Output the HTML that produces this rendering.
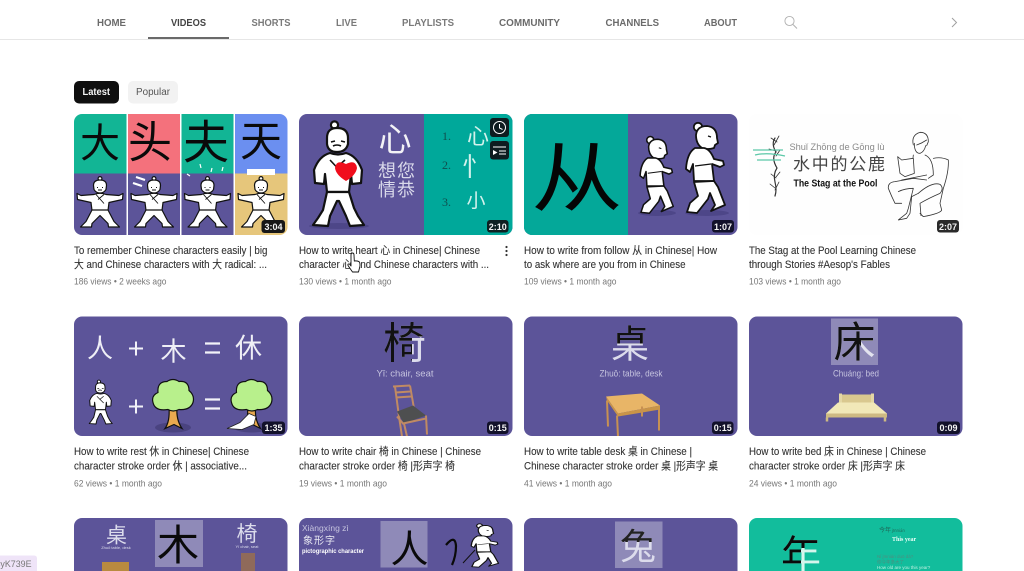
<!DOCTYPE html>
<html lang="en"><head><meta charset="utf-8"><title>Videos</title>
<style>
html,body{margin:0;padding:0;background:#fff;width:1024px;height:571px;overflow:hidden}
svg#p{display:block;filter:blur(.3px)}
text{font-family:"Liberation Sans","Noto Sans CJK SC",sans-serif}
.tab{font-size:10px;font-weight:700;fill:#6b6b6b}
.t{font-size:11px;fill:#333;stroke:#333;stroke-width:.12}
.m{font-size:9.5px;fill:#777}
.d{font-size:9px;font-weight:700;fill:#f4f4f4;text-anchor:middle}
.c{text-anchor:middle}
.k{font-family:"Noto Sans CJK SC","Liberation Sans",sans-serif;text-anchor:middle}
.l{fill:none;stroke:#333;stroke-width:.8;stroke-linejoin:round;stroke-linecap:round}
.z{fill:none;stroke:#333;stroke-width:2.4;stroke-linejoin:round;stroke-linecap:round}
</style></head><body>
<svg id="p" xmlns="http://www.w3.org/2000/svg" width="1024" height="571" viewBox="0 0 1024 571">
<defs>
<clipPath id="r1"><rect width="213.5" height="121" rx="8"/></clipPath>
<clipPath id="r2"><rect width="213.5" height="119.5" rx="8"/></clipPath>
<clipPath id="r3"><rect width="213.5" height="70" rx="8"/></clipPath>
<g id="arms" stroke="#111" stroke-width="1.2" stroke-linejoin="round" fill="#fff">
<circle cx="0" cy="2" r="1.9"/>
<path d="M-6.5 9Q-6.5 3.5 0 3.5Q6.5 3.5 6.5 9L6 13Q4 16.5 0 16.5Q-4 16.5 -6 13Z"/>
<path d="M-6 18L-19 19L-23 17L-22.5 23L-9 26L-8 34H8L9 26L22.5 23L23 17L19 19L6 18Q0 15.5-6 18Z"/>
<path d="M-8 33.5L-14 45L-19.5 50.5H-8.5L-8 47L0 39L8 47L8.5 50.5H19.5L14 45L8 33.5Z"/>
<path d="M-4 18L4 27M4 18L-2 23" fill="none" stroke-width=".9"/>
<path d="M-3 11H-2M2 11H3M-2 13.500H2" fill="none" stroke-width=".9"/>
</g>
<g id="stand" stroke="#111" stroke-width="2.2" stroke-linejoin="round" fill="#fff">
<circle cx="-3.5" cy="5" r="3.6"/>
<path d="M-11 18Q-11 8 -1 8Q10 8 10 18L10 24Q8 32 -1 32Q-10 32 -11 24Z"/>
<path d="M-8 33Q-19 36 -24 50L-23 63L-14 64L-13 54L-11 72H11L13 54L14 64L23 63L24 50Q19 36 8 33Q0 36-8 33Z"/>
<path d="M-11 72L-15 90L-20 98L-25 105L-10 106L-8 96L-1 81L1 81L8 96L12 106L26 105L20 96L16 88L11 72Z"/>
<path d="M-7 22L-3 21M3 21L7 22M-5 26Q-1 24 3 26M-8 40L7 56M7 40L-2 48" fill="none" stroke-width="1.6"/>
</g>
<g id="walk" stroke="#111" stroke-width="1.8" stroke-linejoin="round" fill="#fff">
<circle cx="-2" cy="6" r="4.2"/>
<path d="M-4 14Q-3 5 7 5Q17 6 17 17L18 22L15 24L14 27Q8 29 2 27Q-4 23-4 14Z"/>
<path d="M-5 27Q-13 32 -14 48L-10 51L-7 43L-6 60H14L12 43L20 46L24 44L23 40L14 38Q10 28 4 27Z"/>
<path d="M-6 61L-2 75L-10 82L-13 91L-3 92L8 78L10 72L15 84L11 90L25 84L18 66L14 60Z"/>
<path d="M8 15L11 16M-5 45L11 43" fill="none" stroke-width="1.2"/>
</g>
<g id="tree">
<ellipse cx="0" cy="14" rx="18" ry="5" fill="#4a4380"/>
<path d="M-8 15Q-3 8-4-6L4-6Q3 6 9 15L1 11Z" fill="#e9a94f" stroke="#111" stroke-width="1.2"/>
<path d="M-5-4Q-18-2-20-11Q-22-18-15-21Q-16-32-6-32Q0-36 6-32Q16-33 16-23Q22-18 20-11Q17-3 6-4Q0-1-5-4Z" fill="#b8f08c" stroke="#111" stroke-width="1.2"/>
</g>
</defs>

<!-- header -->
<rect x="0" y="39" width="1024" height="1" fill="#e6e6e6"/>
<rect x="148" y="37" width="81" height="2" fill="#6a6a6a"/>
<g>
<text class="tab" x="97" y="26" textLength="29" lengthAdjust="spacingAndGlyphs">HOME</text>
<text class="tab" x="171" y="26" textLength="35" lengthAdjust="spacingAndGlyphs" style="fill:#444">VIDEOS</text>
<text class="tab" x="251.500" y="26" textLength="39" lengthAdjust="spacingAndGlyphs" style="fill:#7a7a7a">SHORTS</text>
<text class="tab" x="336" y="26" textLength="21" lengthAdjust="spacingAndGlyphs" style="fill:#7a7a7a">LIVE</text>
<text class="tab" x="402" y="26" textLength="52" lengthAdjust="spacingAndGlyphs" style="fill:#7a7a7a">PLAYLISTS</text>
<text class="tab" x="499" y="26" textLength="61" lengthAdjust="spacingAndGlyphs">COMMUNITY</text>
<text class="tab" x="605.500" y="26" textLength="53.500" lengthAdjust="spacingAndGlyphs">CHANNELS</text>
<text class="tab" x="704" y="26" textLength="33" lengthAdjust="spacingAndGlyphs">ABOUT</text>
</g>
<circle cx="789.500" cy="21" r="4.600" fill="none" stroke="#b0b0b0" stroke-width=".9"/>
<path d="M793 24.500L797 28.500" stroke="#b0b0b0" stroke-width="1"/>
<path d="M952 18L956.500 22.500L952 27" fill="none" stroke="#a0a0a0" stroke-width="1"/>

<!-- chips -->
<rect x="74" y="81" width="45" height="22.500" rx="5" fill="#0f0f0f"/>
<text x="82.500" y="95" font-size="10" font-weight="700" fill="#f5f5f5" textLength="27.500" lengthAdjust="spacingAndGlyphs">Latest</text>
<rect x="128" y="81" width="50" height="22.500" rx="5" fill="#f2f2f2"/>
<text x="136" y="95" font-size="10" fill="#555" textLength="34" lengthAdjust="spacingAndGlyphs">Popular</text>

<!-- thumb 1 -->
<g transform="translate(74,114)" clip-path="url(#r1)">
<rect width="214" height="121" fill="#fff"/>
<rect x="0" width="52.500" height="59.500" fill="#12b595"/>
<rect x="54" width="52" height="59.500" fill="#f4717c"/>
<rect x="107.500" width="52" height="59.500" fill="#12b595"/>
<rect x="161" width="53" height="59.500" fill="#6b8ff0"/>
<rect x="0" y="59.500" width="52.500" height="62" fill="#5c5499"/>
<rect x="54" y="59.500" width="52" height="62" fill="#5c5499"/>
<rect x="107.500" y="59.500" width="52" height="62" fill="#5c5499"/>
<rect x="161" y="59.500" width="53" height="62" fill="#e6c67b"/>
<text class="k" x="26" y="43" font-size="40" fill="#0a0a0a">大</text>
<text class="k" x="76" y="43.500" font-size="44" fill="#0a0a0a">头</text>
<text class="k" x="132" y="44.500" font-size="46" fill="#0a0a0a">夫</text>
<text class="k" x="187" y="42" font-size="42" fill="#0a0a0a">天</text>
<use href="#arms" transform="translate(26,62.500)"/>
<use href="#arms" transform="translate(80,62.500)"/>
<use href="#arms" transform="translate(133.500,62.500)"/>
<use href="#arms" transform="translate(187,62.500)"/>
<path d="M62 63L71 66M59 69L68 72" stroke="#fff" stroke-width="2.200"/>
<path d="M113 60L116 62M126 50L127 54M138 54L137 58M149 53L148 57" stroke="#fff" stroke-width="1.200"/>
<rect x="173" y="55" width="28" height="6" fill="#fff"/>
</g>

<!-- thumb 2 -->
<g transform="translate(299,114)" clip-path="url(#r1)">
<rect width="214" height="121" fill="#5c5499"/>
<rect x="125" width="89" height="121" fill="#00a89a"/>
<ellipse cx="40" cy="112" rx="30" ry="3" fill="#4d4688"/>
<use href="#stand" transform="translate(39,6)"/>
<path d="M47 50Q37 45 36 54Q37 61 47 67Q57 61 58 54Q57 45 47 50Z" fill="#f00d1c"/>
<text class="k" x="96" y="37" font-size="33" fill="#f2f2f6">心</text>
<text class="k" x="88" y="63" font-size="18" fill="#d9d9ea">想</text>
<text class="k" x="107" y="63" font-size="18" fill="#d9d9ea">您</text>
<text class="k" x="88" y="82" font-size="18" fill="#d9d9ea">情</text>
<text class="k" x="107" y="82" font-size="18" fill="#d9d9ea">恭</text>
<text x="143" y="26" font-size="12" style="font-family:'Liberation Serif',serif" fill="#0f4f4f">1.</text>
<text x="143" y="55" font-size="12" style="font-family:'Liberation Serif',serif" fill="#0f4f4f">2.</text>
<text x="143" y="92" font-size="12" style="font-family:'Liberation Serif',serif" fill="#0f4f4f">3.</text>
<text class="k" x="179" y="30" font-size="22" fill="#d3f2ec">心</text>
<text class="k" x="176" y="62" font-size="26" fill="#d3f2ec">忄</text>
<text class="k" x="177" y="93" font-size="19" fill="#d3f2ec">小</text>
<rect x="191" y="4" width="19" height="19" rx="3" fill="#0e1c20"/>
<circle cx="200.500" cy="13.500" r="6" fill="none" stroke="#fff" stroke-width="1"/>
<path d="M200.500 10V14L203.500 15.500" fill="none" stroke="#fff" stroke-width="1"/>
<rect x="191" y="27" width="19" height="18.500" rx="3" fill="#0e1c20"/>
<path d="M194 33H207M200 37H207M200 40H207" stroke="#fff" stroke-width="1"/>
<path d="M194 36V41L198.500 38.500Z" fill="#fff"/>
</g>

<!-- thumb 3 -->
<g transform="translate(524,114)" clip-path="url(#r1)">
<rect width="214" height="121" fill="#5c5499"/>
<rect width="104" height="121" fill="#04a899"/>
<text class="k" transform="translate(53,91) scale(1.06,.88)" font-size="86" fill="#050505">从</text>
<ellipse cx="133" cy="99" rx="19" ry="3" fill="#4d4688"/>
<ellipse cx="183" cy="99" rx="22" ry="3" fill="#4d4688"/>
<use href="#walk" transform="translate(128,21) scale(.85)"/>
<use href="#walk" transform="translate(176,7)"/>
</g>

<!-- thumb 4 -->
<g transform="translate(749,114)" clip-path="url(#r1)">
<rect width="214" height="121" fill="#fefefe"/>
<path d="M26 24Q22 30 27 38Q22 44 28 54Q24 60 26 68Q28 76 26 82" class="l" style="stroke-width:1.200"/>
<path d="M22 24L28 28M30 22L25 31M20 35L27 37M31 36L27 42M21 70L26 74M30 68L26 76M22 60L27 64M31 58L27 63" class="l"/>
<path d="M4 36H34M6 41Q18 38 36 42M8 46H32" fill="none" stroke="#5cc8a8" stroke-width="1.300"/>
<text class="c" x="88" y="36" font-size="9.500" fill="#8a8a8a" textLength="95" lengthAdjust="spacingAndGlyphs">Shuǐ Zhōng de Gōng lù</text>
<text class="k" x="90" y="56" font-size="17" fill="#444" textLength="92" lengthAdjust="spacing">水中的公鹿</text>
<text x="44.500" y="72.500" font-size="10.500" font-weight="700" fill="#111" textLength="84" lengthAdjust="spacingAndGlyphs">The Stag at the Pool</text>
<g transform="translate(136,11) scale(.3333)" class="z">
<path d="M85 60Q78 30 105 22Q130 22 130 50L125 62"/>
<path d="M88 55Q88 85 105 85Q118 80 122 62M95 60Q110 55 125 45"/>
<path d="M85 90L80 135M120 90Q145 100 145 150L130 160"/>
<path d="M38 95L50 105L85 100L88 145L60 155L45 145Z" fill="#fff"/>
<path d="M145 100Q170 95 190 105Q192 140 175 190L165 235L170 255Q168 265 115 275L105 265"/>
<path d="M100 205Q140 170 165 178Q178 190 165 205Q130 220 105 235L108 272"/>
<path d="M10 190Q8 172 30 170L85 160L125 165M10 190Q20 215 30 235L50 235"/>
<path d="M50 165L125 150M40 200Q60 190 85 190L70 250L65 265L40 285L65 280L75 265L80 215L100 205"/>
</g>
</g>

<!-- thumb 5 -->
<g transform="translate(74,316.500)" clip-path="url(#r2)">
<rect width="214" height="120" fill="#5c5499"/>
<text class="k" x="26" y="41" font-size="26" fill="#efeff6">人</text>
<text class="k" x="99.500" y="44" font-size="26" fill="#efeff6">木</text>
<text class="k" x="174.500" y="41" font-size="27" fill="#efeff6">休</text>
<path d="M55 32H69M62 25V39M55 90H69M62 83V97" stroke="#f2f2f8" stroke-width="2"/>
<path d="M131 27H146M131 36H146M131 83H146M131 92H146" stroke="#f2f2f8" stroke-width="2.200"/>
<use href="#stand" transform="translate(26.500,63) scale(.45,.42)"/>
<use href="#tree" transform="translate(99,97)"/>
<use href="#tree" transform="translate(177.500,97)"/>
<path d="M153 112L166 106L175 97L182 100L180 108L168 113Z" fill="#fff" stroke="#222" stroke-width=".8"/>
</g>

<!-- thumb 6 -->
<g transform="translate(299,316.500)" clip-path="url(#r2)">
<rect width="214" height="120" fill="#5c5499"/>
<text class="k" x="105.500" y="42" font-size="43" fill="#dcdcec">椅</text>
<clipPath id="h6"><path d="M0 0H214V20H113V60H0Z"/></clipPath>
<text class="k" x="105.500" y="42" font-size="43" fill="#111" clip-path="url(#h6)">椅</text>
<text class="c" x="106" y="60" font-size="9.500" fill="#c6c4df" textLength="57" lengthAdjust="spacingAndGlyphs">Yǐ: chair, seat</text>
<path d="M94 70L111 69M96 70L100 100M111 69L115 92M97 76L111 75M97 81L112 80" fill="none" stroke="#c08a63" stroke-width="2"/>
<path d="M98 95L114 89L127 99L105 107Z" fill="#4e4f50"/>
<path d="M100 100L103 120M105 107L108 120M127 99L128 118M98 100L104 107L127 102" fill="none" stroke="#c08a63" stroke-width="2"/>
</g>

<!-- thumb 7 -->
<g transform="translate(524,316.500)" clip-path="url(#r2)">
<rect width="214" height="120" fill="#5c5499"/>
<text class="k" x="106" y="41" font-size="38" fill="#dcdcec">桌</text>
<clipPath id="h7"><rect width="214" height="27"/></clipPath>
<text class="k" x="106" y="41" font-size="38" fill="#111" clip-path="url(#h7)">桌</text>
<text class="c" x="107" y="60" font-size="9" fill="#c6c4df" textLength="63" lengthAdjust="spacingAndGlyphs">Zhuō: table, desk</text>
<path d="M82 80L118 77L136 89L94 97Z" fill="#e8b567"/>
<path d="M82 80L83 84L94 100L136 93L136 89L94 97Z" fill="#c99448"/>
<path d="M83 84L84 110M93 99L94 120M118 90L118 100M135 93L135 114" stroke="#c79152" stroke-width="2"/>
</g>

<!-- thumb 8 -->
<g transform="translate(749,316.500)" clip-path="url(#r2)">
<rect width="214" height="120" fill="#5c5499"/>
<rect x="82" y="2" width="47" height="46.500" fill="#8f8ab8"/>
<text class="k" x="105.500" y="40.500" font-size="42" fill="#e2e2ee">床</text>
<clipPath id="h8"><path d="M0 0H214V24H112V46H80Z"/></clipPath>
<text class="k" x="105.500" y="40.500" font-size="42" fill="#111" clip-path="url(#h8)">床</text>
<text class="c" x="107" y="60" font-size="9" fill="#c6c4df" textLength="46" lengthAdjust="spacingAndGlyphs">Chuáng: bed</text>
<path d="M90 78H124V88H90Z" fill="#d9c88f"/>
<rect x="90" y="77" width="3" height="11" fill="#e4d7a5"/>
<rect x="122" y="77" width="3" height="11" fill="#e4d7a5"/>
<path d="M89 86H125L138 97H77Z" fill="#f1e8b8"/>
<path d="M77 97H138V101H77Z" fill="#cdb983"/>
<path d="M78 101V105M136 101V105" stroke="#cdb983" stroke-width="2.500"/>
</g>

<!-- row 3 -->
<g transform="translate(74,518)" clip-path="url(#r3)">
<rect width="214" height="70" fill="#5c5499"/>
<rect x="81" y="2" width="48" height="47" fill="#8f8ab8"/>
<text class="k" x="42.500" y="24.500" font-size="21" fill="#dcdcec">桌</text>
<text class="k" x="104" y="42" font-size="42" fill="#0a0a0a">木</text>
<text class="k" x="173" y="23" font-size="21" fill="#dcdcec">椅</text>
<text class="c" x="42" y="31" font-size="4" fill="#dcdcec">Zhuō table, desk</text>
<text class="c" x="173" y="30" font-size="4" fill="#dcdcec">Yǐ chair, seat</text>
<rect x="28" y="44" width="27" height="20" fill="#b98a3f"/>
<rect x="167" y="35" width="14" height="24" fill="#8f6a5a"/>
</g>
<g transform="translate(299,518)" clip-path="url(#r3)">
<rect width="214" height="70" fill="#5c5499"/>
<rect x="81.500" y="3" width="47" height="46.500" fill="#8f8ab8"/>
<text x="3" y="13" font-size="8.500" fill="#c6c4df">Xiàngxíng zì</text>
<text x="4" y="26" font-size="10" fill="#e8e8f2" style="font-family:'Noto Sans CJK SC',sans-serif" textLength="32">象形字</text>
<text x="3" y="35" font-size="6" font-weight="700" fill="#fff" textLength="62" lengthAdjust="spacingAndGlyphs">pictographic character</text>
<text class="k" x="110.500" y="44.500" font-size="38" fill="#0a0a0a">人</text>
<path d="M147 27Q156 16 157 28Q157 38 153 47" fill="none" stroke="#0a0a0a" stroke-width="2.200"/>
<use href="#walk" transform="translate(182,5) scale(.7,.48)"/>
<path d="M176 32L164 45" stroke="#111" stroke-width="1"/>
</g>
<g transform="translate(524,518)" clip-path="url(#r3)">
<rect width="214" height="70" fill="#5c5499"/>
<rect x="91" y="3.500" width="47.500" height="46.500" fill="#8f8ab8"/>
<text class="k" x="114" y="41" font-size="36" fill="#dcdcec">兔</text>
<clipPath id="h11"><rect width="214" height="24"/></clipPath>
<text class="k" x="114" y="41" font-size="36" fill="#222" clip-path="url(#h11)">兔</text>
</g>
<g transform="translate(749,518)" clip-path="url(#r3)">
<rect width="214" height="70" fill="#12bd9c"/>
<text class="k" x="52" y="51" font-size="40" fill="#d6f5ec">年</text>
<clipPath id="h12"><path d="M0 0H214V30H52V70H0Z"/></clipPath>
<text class="k" x="52" y="51" font-size="40" fill="#0a0a0a" clip-path="url(#h12)">年</text>
<text x="130" y="14" font-size="6" fill="#1f6a5a" style="font-family:'Noto Sans CJK SC',sans-serif">今年<tspan font-size="4"> jīnnián</tspan></text>
<text x="143" y="23" font-size="6" font-weight="700" fill="#eafff8" style="font-family:'Liberation Serif',serif">This year</text>
<text x="128" y="40" font-size="4.500" fill="#4d8f80">Nǐ jīnnián duō dà?</text>
<text x="128" y="45.500" font-size="4.500" fill="#4d8f80" style="font-family:'Noto Sans CJK SC',sans-serif">你今年多大了</text>
<text x="128" y="51" font-size="4.500" fill="#bff0e0">How old are you this year?</text>
</g>

<!-- durations -->
<rect x="261.500" y="220" width="23.500" height="13" rx="3" fill="#171717"/>
<rect x="487" y="220" width="21.500" height="12.500" rx="3" fill="#0e2022"/>
<rect x="712" y="220" width="22" height="12.500" rx="3" fill="#12112a"/>
<rect x="937" y="220" width="22" height="12.500" rx="3" fill="#2a2a2a"/>
<rect x="262" y="421.500" width="23" height="12.500" rx="3" fill="#12112a"/>
<rect x="487" y="421.500" width="21.500" height="12.500" rx="3" fill="#12112a"/>
<rect x="712" y="421.500" width="21.500" height="12.500" rx="3" fill="#12112a"/>
<rect x="937" y="421.500" width="23" height="12.500" rx="3" fill="#12112a"/>
<text class="d" x="273.500" y="229.800">3:04</text>
<text class="d" x="497.800" y="229.800">2:10</text>
<text class="d" x="723" y="229.800">1:07</text>
<text class="d" x="948" y="229.800">2:07</text>
<text class="d" x="273.500" y="431">1:35</text>
<text class="d" x="497.800" y="431">0:15</text>
<text class="d" x="722.800" y="431">0:15</text>
<text class="d" x="948.500" y="431">0:09</text>

<!-- titles -->
<text class="t" x="74" y="254" textLength="193.500" lengthAdjust="spacingAndGlyphs">To remember Chinese characters easily | big</text>
<text class="t" x="74" y="268" textLength="193" lengthAdjust="spacingAndGlyphs">大 and Chinese characters with 大 radical: ...</text>
<text class="m" x="74" y="284.500" textLength="92.500" lengthAdjust="spacingAndGlyphs">186 views • 2 weeks ago</text>

<text class="t" x="299" y="254" textLength="181" lengthAdjust="spacingAndGlyphs">How to write heart 心 in Chinese| Chinese</text>
<text class="t" x="299" y="268" textLength="190" lengthAdjust="spacingAndGlyphs">character 心 and Chinese characters with ...</text>
<text class="m" x="299" y="284.500" textLength="92.500" lengthAdjust="spacingAndGlyphs">130 views • 1 month ago</text>
<g fill="#333"><circle cx="506.500" cy="247" r="1.100"/><circle cx="506.500" cy="251" r="1.100"/><circle cx="506.500" cy="255" r="1.100"/></g>

<text class="t" x="524" y="254" textLength="193" lengthAdjust="spacingAndGlyphs">How to write from follow 从 in Chinese| How</text>
<text class="t" x="524" y="268" textLength="161.500" lengthAdjust="spacingAndGlyphs">to ask where are you from in Chinese</text>
<text class="m" x="524" y="284.500" textLength="92.500" lengthAdjust="spacingAndGlyphs">109 views • 1 month ago</text>

<text class="t" x="749" y="254" textLength="167" lengthAdjust="spacingAndGlyphs">The Stag at the Pool Learning Chinese</text>
<text class="t" x="749" y="268" textLength="141" lengthAdjust="spacingAndGlyphs">through Stories #Aesop's Fables</text>
<text class="m" x="749" y="284.500" textLength="92" lengthAdjust="spacingAndGlyphs">103 views • 1 month ago</text>

<text class="t" x="74" y="455" textLength="175" lengthAdjust="spacingAndGlyphs">How to write rest 休 in Chinese| Chinese</text>
<text class="t" x="74" y="469.500" textLength="173" lengthAdjust="spacingAndGlyphs">character stroke order 休 | associative...</text>
<text class="m" x="74" y="486.500" textLength="88" lengthAdjust="spacingAndGlyphs">62 views • 1 month ago</text>

<text class="t" x="299" y="455" textLength="182" lengthAdjust="spacingAndGlyphs">How to write chair 椅 in Chinese | Chinese</text>
<text class="t" x="299" y="469.500" textLength="156" lengthAdjust="spacingAndGlyphs">character stroke order 椅 |形声字 椅</text>
<text class="m" x="299" y="486.500" textLength="88" lengthAdjust="spacingAndGlyphs">19 views • 1 month ago</text>

<text class="t" x="524" y="455" textLength="168" lengthAdjust="spacingAndGlyphs">How to write table desk 桌 in Chinese |</text>
<text class="t" x="524" y="469.500" textLength="194" lengthAdjust="spacingAndGlyphs">Chinese character stroke order 桌 |形声字 桌</text>
<text class="m" x="524" y="486.500" textLength="88" lengthAdjust="spacingAndGlyphs">41 views • 1 month ago</text>

<text class="t" x="749" y="455" textLength="177" lengthAdjust="spacingAndGlyphs">How to write bed 床 in Chinese | Chinese</text>
<text class="t" x="749" y="469.500" textLength="156" lengthAdjust="spacingAndGlyphs">character stroke order 床 |形声字 床</text>
<text class="m" x="749" y="486.500" textLength="88" lengthAdjust="spacingAndGlyphs">24 views • 1 month ago</text>

<!-- cursor -->
<path d="M351 255Q351 253 352.500 253Q354 253 354 255L354.300 261Q357.500 260.500 359.500 262Q360.500 265 359.500 268L358.500 272H352.500L348 265.500Q347.500 263.500 349.500 264L351 266Z" fill="#fff" stroke="#111" stroke-width=".9" stroke-linejoin="round"/>

<!-- corner tag -->
<path d="M0 555.500H34Q37 555.500 37 558.500V571H0Z" fill="#efe4f8"/>
<text x="-4" y="567" font-size="9" fill="#777" textLength="35.500" lengthAdjust="spacingAndGlyphs">cyK739E</text>
</svg>
</body></html>
